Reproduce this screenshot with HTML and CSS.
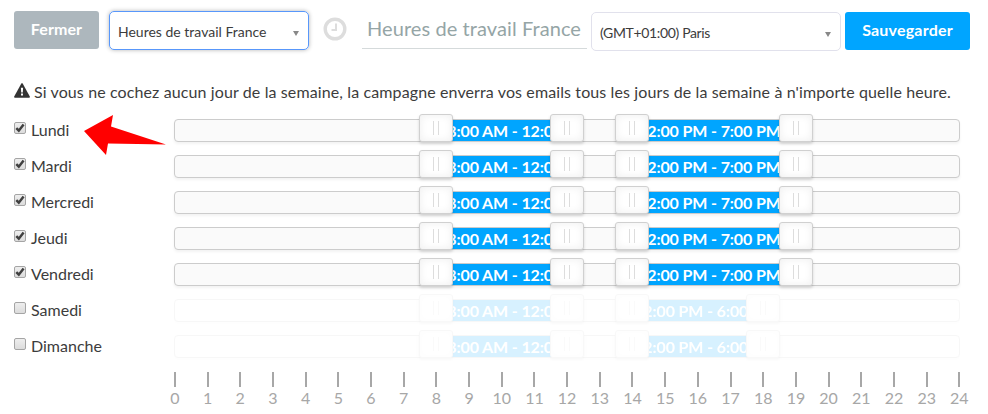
FILE: index.html
```html
<!DOCTYPE html>
<html lang="fr">
<head>
	<meta charset="utf-8">
	<title>Heures de travail</title>
	<link rel="stylesheet" href="styles.css">
</head>
<body>
	<div class="toolbar">
		<button type="button" class="btn btn-close">Fermer</button>
		<div class="select select-active"><span>Heures de travail France</span><i class="caret"></i></div>
		<svg class="clock" viewBox="0 0 24 24">
			<circle cx="12" cy="12" r="9.8"/>
			<path d="M13 6.5V13H8.5"/>
		</svg>
		<div class="name"><span>Heures de travail France</span></div>
		<div class="select select-zone"><span>(GMT+01:00) Paris</span><i class="caret"></i></div>
		<button type="button" class="btn btn-save">Sauvegarder</button>
	</div>

	<p class="notice">
		<svg class="warning" viewBox="0 0 16 15">
			<path d="M7.2.7Q8-.5 8.8.7L15.8 13.4Q16.300 14.700 15 14.700H1Q-.3 14.700.2 13.400Z"/>
			<path class="mark" d="M6.900 4.800H9.100L8.800 9.500H7.200ZM7 10.600H9V12.600H7Z"/>
		</svg>
		<span>Si vous ne cochez aucun jour de la semaine, la campagne enverra vos emails tous les jours de la semaine à n'importe quelle heure.</span>
	</p>

	<div class="schedule">
		<div id="days"></div>
		<div class="scale" id="scale"></div>
		<svg class="arrow" viewBox="0 0 82 40">
			<polygon points="0,16 29,0 27,11.500 82,29.500 24,28.500 22,40"/>
		</svg>
	</div>

	<script>
		const am = { from: 8, to: 12, text: '8:00 AM - 12:00 PM' };
		const pm = { from: 14, to: 19, text: '2:00 PM - 7:00 PM' };
		const pmShort = { from: 14, to: 18, text: '2:00 PM - 6:00 PM' };
		const days = [
			['Lundi', true, [am, pm]],
			['Mardi', true, [am, pm]],
			['Mercredi', true, [am, pm]],
			['Jeudi', true, [am, pm]],
			['Vendredi', true, [am, pm]],
			['Samedi', false, [am, pmShort]],
			['Dimanche', false, [am, pmShort]]
		];
		const tick = '<svg viewBox="0 0 12 12"><path d="M2.300 6.200L4.800 8.700L9.600 2.600"/></svg>';
		const pos = hour => (hour / 24 * 100) + '%';

		document.getElementById('days').innerHTML = days.map(([name, on, ranges]) => `
			<div class="day">
				<div class="day-label"><span class="check">${on ? tick : ''}</span><span>${name}</span></div>
				<div class="track ${on ? '' : 'off'}">
					<div class="hours">
						${ranges.map(r => `
							<div class="range" style="left:${pos(r.from)};width:${pos(r.to - r.from)}"><span>${r.text}</span></div>
							<div class="handle" style="left:${pos(r.from)}"></div>
							<div class="handle" style="left:${pos(r.to)}"></div>`).join('')}
					</div>
				</div>
			</div>`).join('');

		let marks = '';
		for (let h = 0; h <= 24; h++) {
			marks += `<div class="mark-hour"><i></i><span>${h}</span></div>`;
		}
		document.getElementById('scale').innerHTML = marks;
	</script>
</body>
</html>
```
FILE: styles.css
```css
* {
	box-sizing: border-box;
}

body {
	margin: 0;
	padding: 11px 18px 0 14px;
	height: 414px;
	overflow: hidden;
	background: #fff;
	color: #3c3c3c;
	font-family: Lato, "Open Sans", sans-serif;
	font-size: 16px;
}

.toolbar {
	display: flex;
	align-items: flex-start;
	height: 40px;
}

.btn {
	flex: none;
	height: 38px;
	padding: 0 0 3px;
	border: 0;
	border-radius: 3px;
	color: #fff;
	font: bold 16px Lato, sans-serif;
}

.btn-close {
	width: 85px;
	background: #adb7bd;
	letter-spacing: .1px;
}

.btn-save {
	width: 125px;
	margin: 1px 0 0 4px;
	background: #00a5ff;
	letter-spacing: .2px;
}

.select {
	display: flex;
	flex: none;
	align-items: center;
	justify-content: space-between;
	height: 39px;
	padding: 1px 9px 0;
	border: 1px solid #e1e1ec;
	border-radius: 5px;
	font-size: 14px;
	white-space: nowrap;
}

.select-active {
	width: 200px;
	margin-left: 10px;
	padding-left: 8px;
	border-color: #5897fb;
	box-shadow: 0 0 4px rgba(0, 0, 0, .3);
}

.select-zone {
	width: 250px;
	margin: 1px 0 0 4px;
	padding-left: 8px;
	letter-spacing: -.35px;
}

.caret {
	border: solid transparent;
	border-width: 5px 3.5px 0;
	border-top-color: #888;
	margin-top: 5px;
}

.clock {
	flex: none;
	width: 24px;
	height: 24px;
	margin: 6px 0 0 14px;
	fill: none;
	stroke: #ddd;
	stroke-width: 3.4;
}

.clock path {
	stroke-width: 2;
}

.name {
	flex: none;
	width: 225px;
	height: 38px;
	margin-left: 15px;
	padding: 4px 0 0 5px;
	border-bottom: 1px solid #d5dadb;
	color: #95a5a6;
	font-size: 20px;
	letter-spacing: .08px;
	line-height: 26px;
	white-space: nowrap;
}

.notice {
	display: flex;
	gap: 4px;
	margin: 31px 0 0;
	line-height: 20px;
	height: 25px;
	letter-spacing: .115px;
	white-space: nowrap;
}

.warning {
	flex: none;
	width: 16px;
	height: 15px;
	margin-top: 1px;
	fill: #333;
}

.warning .mark {
	fill: #fff;
}

.schedule {
	position: relative;
	padding-top: 12px;
}

.day {
	display: flex;
	height: 36px;
}

.day-label {
	display: flex;
	gap: 5px;
	width: 160px;
	line-height: 21px;
}

.check {
	width: 12px;
	height: 12px;
	margin-top: 3px;
	border: 1px solid #a5a5a5;
	border-radius: 2px;
	background: linear-gradient(#eee, #dcdcdc);
}

.check svg {
	display: block;
	width: 12px;
	height: 12px;
	margin: -1px;
	fill: none;
	stroke: #404040;
	stroke-width: 2.5;
}

.track {
	width: 786px;
	height: 23px;
	border: 1px solid #ccc;
	border-radius: 4px;
	background: #fafafa;
	box-shadow: 0 2px 3px rgba(0, 0, 0, .05);
}

.off {
	opacity: .16;
}

.hours {
	position: relative;
	height: 21px;
}

.range {
	position: absolute;
	top: 0;
	display: flex;
	justify-content: safe center;
	height: 21px;
	padding: 0 11px;
	overflow: hidden;
	background: #00a5ff;
	color: #fff;
	font-size: 16px;
	font-weight: bold;
	letter-spacing: -.12px;
	line-height: 21px;
	white-space: nowrap;
}

.handle {
	position: absolute;
	top: -6px;
	width: 34px;
	height: 28px;
	margin-left: -17px;
	border: 1px solid #d0d0d0;
	border-radius: 3px;
	background: #fff;
	box-shadow: inset 0 0 8px #eee, 0 2px 3px rgba(0, 0, 0, .15);
}

.handle::after {
	content: "";
	display: block;
	width: 4px;
	height: 14px;
	margin: 6px auto 0;
	border: solid #ddd;
	border-width: 0 1px;
}

.scale {
	display: flex;
	width: 817px;
	margin-left: 144.5px;
	padding-top: 1px;
	color: #a7a7a7;
}

.mark-hour {
	display: flex;
	flex: 1;
	flex-direction: column;
	align-items: center;
	line-height: 20px;
}

.mark-hour i {
	width: 2px;
	height: 15px;
	margin-bottom: 1px;
	background: #a7a7a7;
}

.arrow {
	position: absolute;
	top: 8px;
	left: 70px;
	width: 82px;
	height: 40px;
	fill: #f00;
}
```
